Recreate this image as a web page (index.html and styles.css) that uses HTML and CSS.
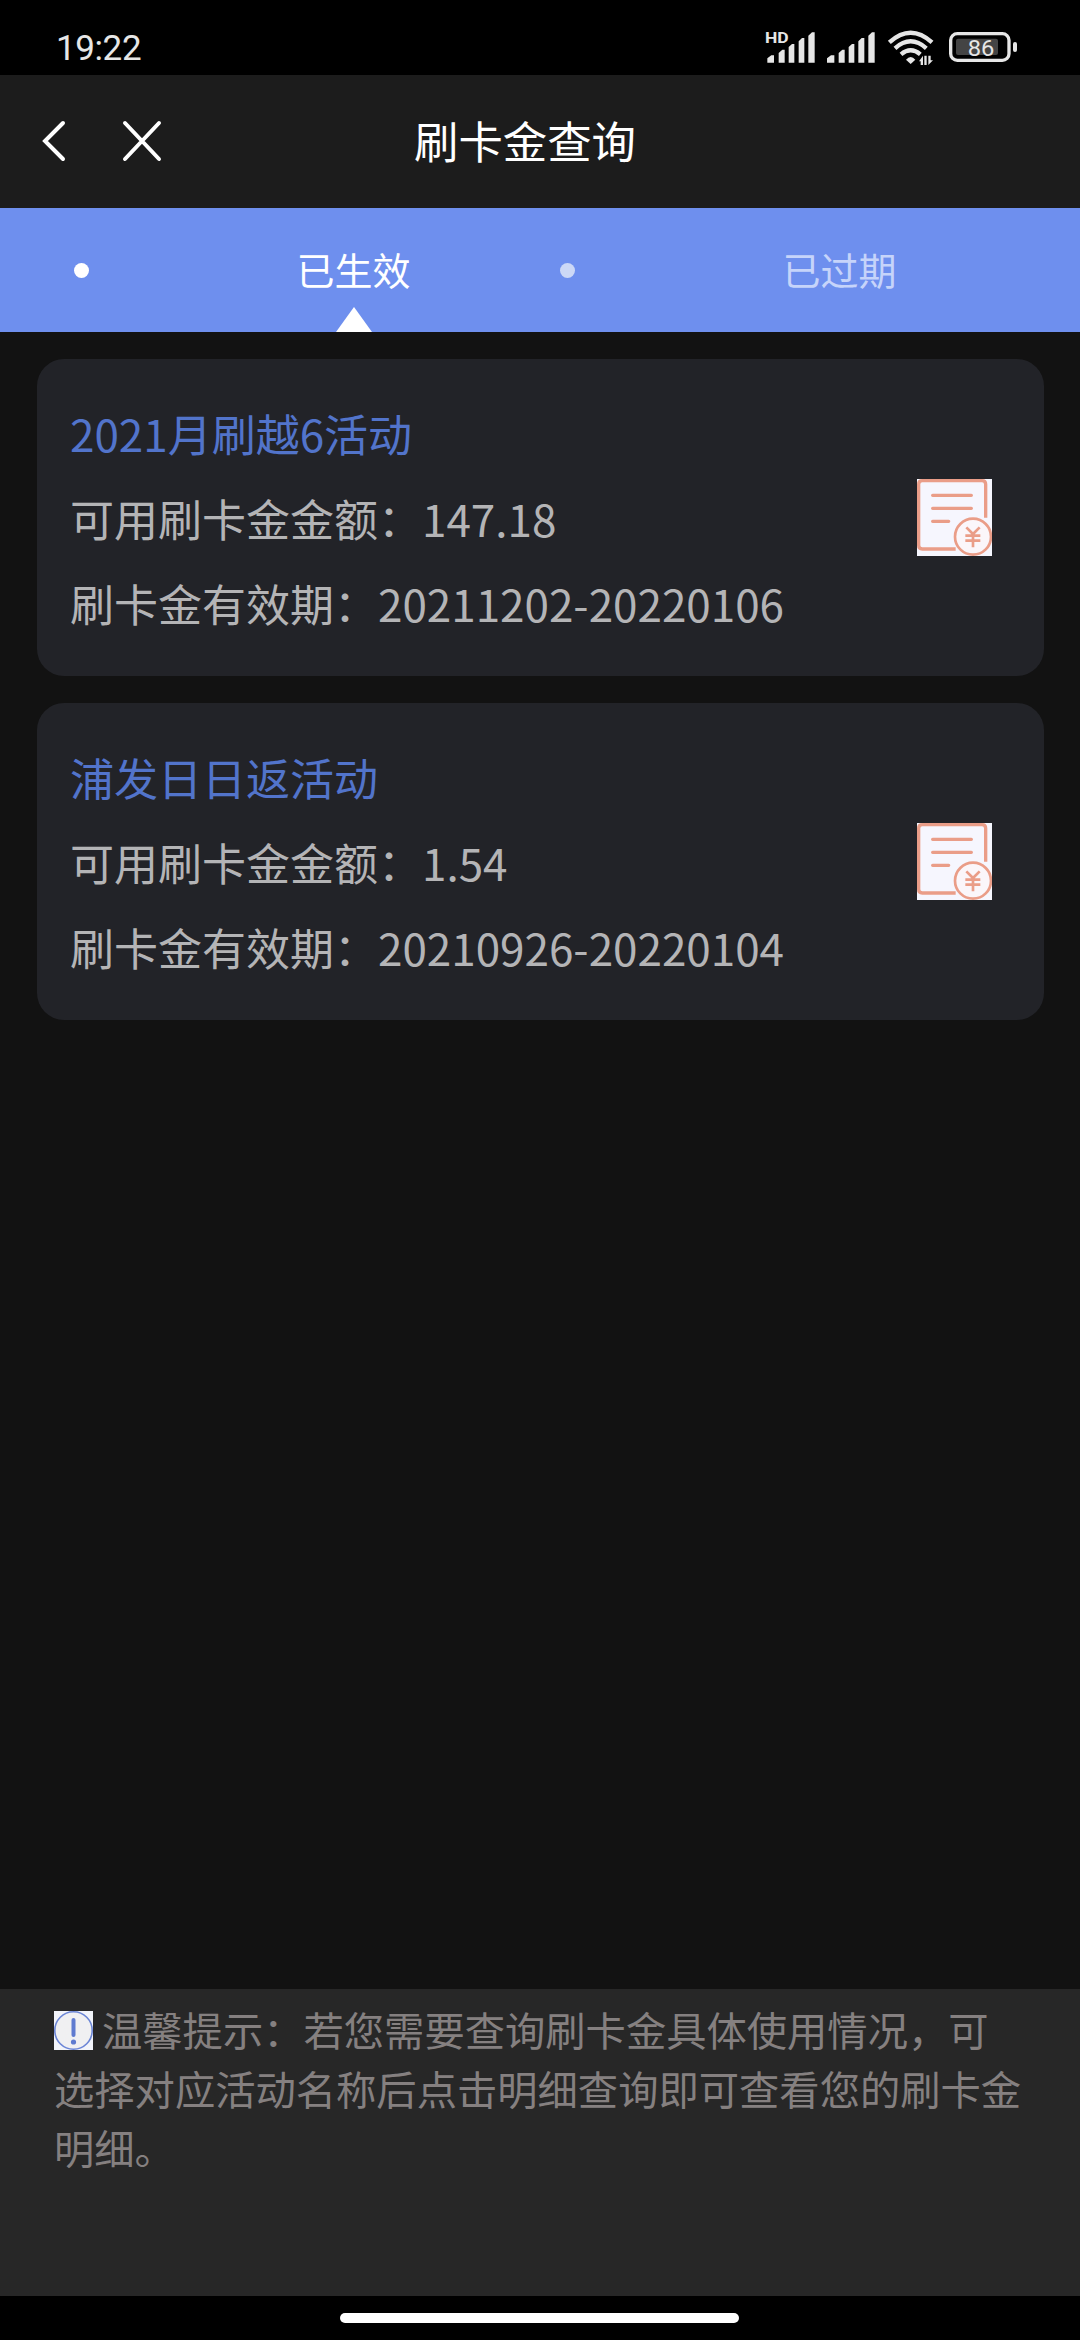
FILE: index.html
```html
<!DOCTYPE html>
<html lang="zh-CN">
<head>
<meta charset="utf-8">
<title>刷卡金查询</title>
<link rel="stylesheet" href="styles.css">
</head>
<body>
<div class="status-bar">
  <span class="clock">19:22</span>
  <div class="indicators">
    <svg class="signal-hd" viewBox="66 51 159 114">
      <text class="hd-label" x="75" y="98" textLength="71" lengthAdjust="spacingAndGlyphs">HD</text>
      <path d="M82 158V145L94 136H102V158ZM116 158V129L127 119H134V158ZM146 158V111L156 102H163V158ZM176 158V94L186 84H193V158ZM205 158V77L216 67H224V158Z"/>
    </svg>
    <svg class="signal" viewBox="261 60 144 105">
      <path d="M261 158V145L273 136H283V158ZM296 158V129L307 119H314V158ZM326 158V111L336 102H343V158ZM355 158V94L365 84H373V158ZM385 158V77L396 67H404V158Z"/>
    </svg>
    <svg class="wifi" viewBox="441 60 141 105">
      <g class="arcs">
        <path d="M448 97Q512 39 576 97"/>
        <path d="M465 115Q512 73 559 115"/>
        <path d="M483 133Q512 109 541 133"/>
      </g>
      <path d="M498 149Q512 133 526 149L512 162Z"/>
      <path d="M537 154L549 137V165H542V154ZM553 137H560V165H553ZM565 137H572V151H579L565 165Z"/>
    </svg>
    <svg class="battery" viewBox="627 60 204 105">
      <rect class="shell" x="632" y="71" width="175" height="80" rx="20"/>
      <rect class="charge" x="648" y="86" width="126" height="49" rx="6"/>
      <rect x="819" y="96" width="12" height="30" rx="6"/>
      <text class="level" x="683" y="137" textLength="80" lengthAdjust="spacingAndGlyphs">86</text>
    </svg>
  </div>
</div>

<header class="header">
  <svg class="back" viewBox="0 0 24 42"><path d="M21 3L3 21L21 39"/></svg>
  <svg class="close" viewBox="0 0 40 42"><path d="M3 3L37 39M37 3L3 39"/></svg>
  <h1 class="title">刷卡金查询</h1>
</header>

<nav class="tabs">
  <a class="tab tab-active"><i class="dot"></i><span class="tab-label">已生效</span></a>
  <a class="tab"><i class="dot"></i><span class="tab-label">已过期</span></a>
</nav>

<main class="list">
  <section class="card">
    <div class="info">
      <h2 class="name">2021月刷越6活动</h2>
      <p>可用刷卡金金额：147.18</p>
      <p>刷卡金有效期：20211202-20220106</p>
    </div>
    <svg class="bill" viewBox="0 0 225 231">
      <rect class="paper" width="225" height="231"/>
      <path class="frame" d="M206 116V16Q206 5 195 5H16Q5 5 5 16V199Q5 210 16 210H116"/>
      <path class="rows" d="M47 49H163M47 88H163M47 127H95"/>
      <circle class="coin" cx="168" cy="173" r="54"/>
      <path class="yen" d="M148 145L168 165L188 145M145 170H190M145 185H190M168 165V205"/>
    </svg>
  </section>
  <section class="card">
    <div class="info">
      <h2 class="name">浦发日日返活动</h2>
      <p>可用刷卡金金额：1.54</p>
      <p>刷卡金有效期：20210926-20220104</p>
    </div>
    <svg class="bill" viewBox="0 0 225 231">
      <rect class="paper" width="225" height="231"/>
      <path class="frame" d="M206 116V16Q206 5 195 5H16Q5 5 5 16V199Q5 210 16 210H116"/>
      <path class="rows" d="M47 49H163M47 88H163M47 127H95"/>
      <circle class="coin" cx="168" cy="173" r="54"/>
      <path class="yen" d="M148 145L168 165L188 145M145 170H190M145 185H190M168 165V205"/>
    </svg>
  </section>
</main>

<footer class="tips">
  <p><svg class="notice" viewBox="0 0 39 39"><rect class="notice-bg" width="39" height="39"/><circle class="notice-ring" cx="19.5" cy="19.5" r="18.7"/><path class="notice-bar" d="M19.5 9V24"/><circle class="notice-dot" cx="19.5" cy="31" r="2.6"/></svg> 温馨提示：若您需要查询刷卡金具体使用情况，可选择对应活动名称后点击明细查询即可查看您的刷卡金明细。</p>
</footer>
<div class="home-area"><div class="home-bar"></div></div>
</body>
</html>
```
FILE: styles.css
```css
* { box-sizing: border-box; }
body {
  margin: 0;
  width: 1080px;
  height: 2340px;
  display: flex;
  flex-direction: column;
  overflow: hidden;
  background: #121212;
  font-family: "Noto Sans CJK SC", sans-serif;
}
h1, h2, p { margin: 0; font-weight: 400; }
svg { display: block; flex: none; }

.status-bar {
  flex: none;
  height: 75px;
  padding: 20px 63px 0 56px;
  display: flex;
  justify-content: space-between;
  background: #000;
  color: #e6e6e6;
}
.clock { font: 400 35px/57px Roboto, sans-serif; letter-spacing: -0.4px; }
.indicators { display: flex; align-items: flex-end; height: 45px; fill: #e6e6e6; }
.signal-hd { width: 53px; height: 38px; }
.signal { width: 48px; height: 35px; margin-left: 12px; }
.wifi { width: 47px; height: 35px; margin-left: 12px; }
.battery { width: 68px; height: 35px; margin-left: 15px; }
.hd-label { font: 700 45px Roboto, sans-serif; }
.arcs path { fill: none; stroke: #e6e6e6; stroke-width: 13; }
.shell { fill: none; stroke: #e6e6e6; stroke-width: 10; }
.charge { fill: #444; }
.level { font: 400 66px Roboto, sans-serif; }

.header {
  flex: none;
  height: 133px;
  padding: 0 0 2px 42px;
  display: flex;
  align-items: center;
  background: #1c1c1c;
  color: #fff;
}
.back { width: 24px; height: 42px; }
.close { width: 40px; height: 42px; margin-left: 56px; }
.back path, .close path { fill: none; stroke: #fff; stroke-width: 4; stroke-linecap: round; }
.title { margin-left: 252px; padding-bottom: 2px; font-size: 44.4px; line-height: 64px; }

.tabs {
  flex: none;
  height: 124px;
  padding-left: 74px;
  display: flex;
  background: #6e8fee;
}
.tab {
  width: 486px;
  display: flex;
  align-items: center;
  color: #c6d4fa;
  font-size: 38px;
}
.dot { width: 15px; height: 15px; border-radius: 50%; background: #ccd8f6; }
.tab-label {
  position: relative;
  flex: 1;
  height: 100%;
  margin-left: 58px;
  line-height: 121px;
  text-align: center;
}
.tab-active { color: #fff; }
.tab-active .dot { background: #fff; }
.tab-active .tab-label::after {
  content: "";
  position: absolute;
  left: 50%;
  bottom: 0;
  margin-left: -18px;
  border: solid transparent;
  border-width: 0 18px 25px;
  border-bottom-color: #fff;
}

.list {
  flex: 1;
  padding: 27px 36px 0 37px;
  display: flex;
  flex-direction: column;
  gap: 27px;
}
.card {
  height: 317px;
  padding: 0 52px 0 33px;
  display: flex;
  align-items: center;
  justify-content: space-between;
  border-radius: 27px;
  background: #222328;
  color: #b4b4b6;
  font-size: 44px;
  line-height: 85px;
}
.info { padding-top: 2px; }
.name { color: #5274cb; font-size: 44px; }
.bill { width: 75px; height: 77px; }
.paper { fill: #f6f6fe; }
.frame, .rows, .coin, .yen { fill: none; stroke: #ea9d88; stroke-width: 10; }
.rows { stroke-linecap: round; }
.coin { fill: #fbf6fa; stroke-width: 8; }
.yen { stroke-width: 8; }

.tips {
  flex: none;
  height: 307px;
  padding: 10px 54px 0;
  background: #272727;
  color: #858080;
  font-size: 40.3px;
  line-height: 59px;
}
.notice { display: inline-block; width: 39px; height: 39px; vertical-align: -4px; }
.notice-bg { fill: #f2f4fa; }
.notice-ring { fill: #f0f0f2; stroke: #6b85d6; stroke-width: 1.6; }
.notice-bar { stroke: #5f7bd0; stroke-width: 4; stroke-linecap: round; }
.notice-dot { fill: #5f7bd0; }

.home-area {
  flex: none;
  height: 44px;
  padding: 17px 0 0 340px;
  background: #000;
}
.home-bar { width: 399px; height: 10px; border-radius: 5px; background: #fff; }
```
